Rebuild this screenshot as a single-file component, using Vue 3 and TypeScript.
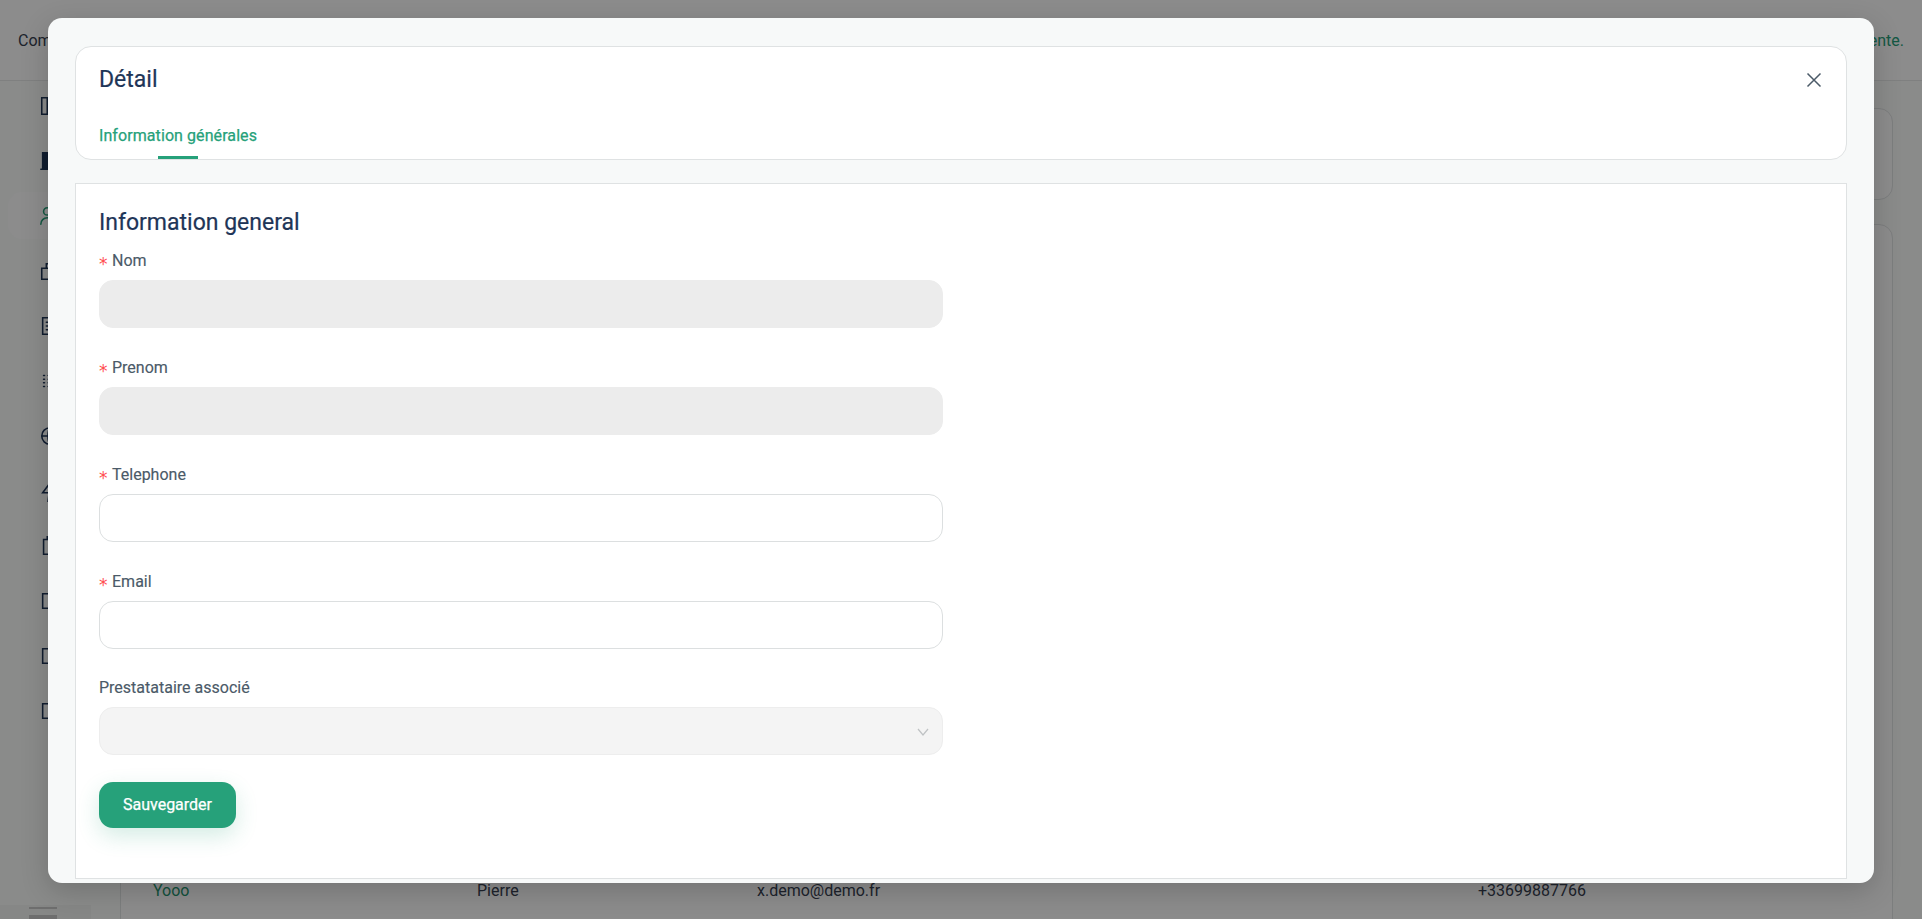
<script setup lang="ts">
interface Field {
  label: string;
  required: boolean;
  kind: 'disabled' | 'text' | 'select';
}

const fields: Field[] = [
  { label: 'Nom', required: true, kind: 'disabled' },
  { label: 'Prenom', required: true, kind: 'disabled' },
  { label: 'Telephone', required: true, kind: 'text' },
  { label: 'Email', required: true, kind: 'text' },
  { label: 'Prestatataire associé', required: false, kind: 'select' },
];

const navIcons = [
  { d: 'M3 3h18v18H3zM9 3v18M13 8h4' },
  { d: 'M4 3h17v18H4zM2 21h20', solid: true },
  { d: 'M9 11a4 4 0 1 0 0-8 4 4 0 0 0 0 8zM2 21c0-4 3-7 7-7s7 3 7 7' },
  { d: 'M3 9h18v12H3zM8 9V4h8v5' },
  { d: 'M4 3h16v18H4zM8 8h8M8 12h8M8 16h5' },
  { d: 'M5 6h1M5 10h1M5 14h1M5 18h1M10 6h1M10 10h1M10 14h1M10 18h1' },
  { d: 'M12 21a9 9 0 1 0 0-18 9 9 0 0 0 0 18zM3 12h18M12 3c3 3 3 15 0 18M12 3c-3 3-3 15 0 18' },
  { d: 'M13 2 4 14h7l-1 8 9-12h-7z' },
  { d: 'M5 5h14v16H5zM9 5V2h6v3' },
  { d: 'M4 4h16v16H4z' },
  { d: 'M4 4h16v16H4z' },
  { d: 'M4 4h16v16H4z' },
];
</script>

<template>
  <div class="page">
    <header class="topbar">
      <span class="topbar-left">Compte</span>
      <span class="topbar-right">Votre compte est en attente.</span>
    </header>
    <div class="layout">
      <aside class="sidebar">
        <div
          v-for="(icon, i) in navIcons"
          :key="i"
          class="nav-item"
          :class="{ 'nav-active': i === 2 }"
        >
          <svg
            width="22"
            height="22"
            viewBox="0 0 24 24"
            :fill="icon.solid ? 'currentColor' : 'none'"
            stroke="currentColor"
            stroke-width="1.7"
            stroke-linecap="round"
          >
            <path :d="icon.d" />
          </svg>
        </div>
        <div class="sidebar-foot">
          <span class="foot-line"></span>
          <span class="foot-line thick"></span>
        </div>
      </aside>
      <main class="main">
        <div class="card card-top"></div>
        <div class="card card-table">
          <div class="row">
            <span class="cell-name">Yooo</span>
            <span class="cell-first">Pierre</span>
            <span class="cell-mail">x.demo@demo.fr</span>
            <span class="cell-phone">+33699887766</span>
          </div>
        </div>
      </main>
    </div>

    <div class="mask">
      <div class="modal">
        <div class="modal-head">
          <div class="head-row">
            <h2 class="modal-title">Détail</h2>
            <svg class="close" width="16" height="16" viewBox="0 0 16 16" fill="none" stroke="#4b5a68" stroke-width="1.5">
              <path d="M1.5 1.5l13 13M14.5 1.5l-13 13" />
            </svg>
          </div>
          <div class="tabs">
            <span class="tab">Information générales</span>
            <span class="tab-ink"></span>
          </div>
        </div>

        <section class="panel">
          <h3 class="panel-title">Information general</h3>
          <div
            v-for="f in fields"
            :key="f.label"
            class="field"
            :class="{ 'field-select': f.kind === 'select' }"
          >
            <label class="label">
              <span v-if="f.required" class="star">*</span>{{ f.label }}
            </label>
            <div v-if="f.kind === 'select'" class="control control-select">
              <svg width="12" height="8" viewBox="0 0 12 8" fill="none" stroke="#bfc2c4" stroke-width="1.2">
                <path d="M1 1l5 6 5-6" />
              </svg>
            </div>
            <div v-else class="control" :class="`control-${f.kind}`"></div>
          </div>
          <button class="save" type="button">Sauvegarder</button>
        </section>
      </div>
    </div>
  </div>
</template>

<style>
html,
body {
  margin: 0;
  overflow: hidden;
}
</style>

<style scoped>
.page {
  position: relative;
  width: 1922px;
  height: 919px;
  overflow: hidden;
  background: #fbfdfc;
  font-family: Roboto, "Liberation Sans", sans-serif;
}
.topbar {
  display: flex;
  align-items: center;
  justify-content: space-between;
  box-sizing: border-box;
  height: 81px;
  padding: 0 18px;
  background: #fff;
  border-bottom: 1px solid #e8eaea;
  font-size: 16px;
  color: #374151;
}
.topbar-right {
  color: #26a17a;
}
.layout {
  display: flex;
  height: 838px;
}
.sidebar {
  position: relative;
  display: flex;
  flex-direction: column;
  gap: 8px;
  box-sizing: border-box;
  width: 120px;
  padding: 1px 10px 0 8px;
  color: #1e3557;
}
.nav-item {
  display: flex;
  align-items: center;
  flex: none;
  height: 47px;
  padding-left: 31px;
  border-radius: 14px;
}
.nav-active {
  color: #26a17a;
  background: #fff;
}
.sidebar-foot {
  position: absolute;
  left: 0;
  width: 91px;
  bottom: 0;
  height: 14px;
  background: #f4f6f5;
}
.foot-line {
  display: block;
  width: 28px;
  height: 2px;
  margin: 2px 0 0 29px;
  background: #c8c8c8;
}
.foot-line.thick {
  height: 4px;
  margin-top: 6px;
}
.main {
  flex: 1;
  box-sizing: border-box;
  min-width: 0;
  padding: 27px 29px 0 0;
}
.card {
  box-sizing: border-box;
  margin-bottom: 24px;
  background: #fff;
  border: 1px solid #e2e5e6;
  border-radius: 14px;
}
.card-top {
  height: 92px;
}
.card-table {
  position: relative;
  height: 720px;
}
.row {
  position: absolute;
  left: 32px;
  right: 0;
  top: 655px;
  display: grid;
  grid-template-columns: 324px 280px 721px 1fr;
  font-size: 16px;
  line-height: 22px;
  color: #374151;
}
.cell-name {
  color: #1f9470;
}
.mask {
  position: absolute;
  inset: 0;
  background: rgba(0, 0, 0, 0.45);
}
.modal {
  box-sizing: border-box;
  width: 1826px;
  height: 865px;
  margin: 18px 0 0 48px;
  padding: 28px 27px 0;
  background: #f7f9f9;
  border-radius: 14px;
  box-shadow: 0 8px 28px rgba(0, 0, 0, 0.18);
}
.modal-head {
  position: relative;
  box-sizing: border-box;
  height: 114px;
  padding: 0 23px;
  background: #fff;
  border: 1px solid #dfe2e3;
  border-radius: 16px;
}
.head-row {
  display: flex;
  align-items: center;
  justify-content: space-between;
  height: 62px;
}
.modal-title {
  margin: 2px 0 0;
  font-size: 23px;
  font-weight: 400;
  color: #1e3557;
  -webkit-text-stroke: 0.2px #1e3557;
}
.close {
  margin-top: 4px;
  margin-right: 1px;
}
.tabs {
  display: flex;
}
.tab {
  margin-top: 16px;
  font-size: 16px;
  line-height: 22px;
  font-weight: 400;
  letter-spacing: 0.08px;
  color: #26a17a;
  -webkit-text-stroke: 0.25px #26a17a;
}
.tab-ink {
  position: absolute;
  left: 82px;
  bottom: 0;
  width: 40px;
  height: 3px;
  background: #26a17a;
}
.panel {
  box-sizing: border-box;
  height: 696px;
  margin-top: 23px;
  padding: 24px 23px 0;
  background: #fff;
  border: 1px solid #dfe2e3;
}
.panel-title {
  margin: 0 0 10px;
  font-size: 23px;
  line-height: 30px;
  font-weight: 400;
  color: #1e3557;
  -webkit-text-stroke: 0.2px #1e3557;
}
.field {
  width: 844px;
  margin-bottom: 27px;
}
.field-select {
  margin-top: -1px;
}
.label {
  display: flex;
  align-items: center;
  height: 24px;
  margin-bottom: 8px;
  font-size: 16px;
  color: #4b5a68;
  -webkit-text-stroke: 0.15px #4b5a68;
}
.star {
  flex: none;
  width: 13px;
  height: 16px;
  font-family: "DejaVu Sans", sans-serif;
  font-size: 17px;
  line-height: 24px;
  color: #ff4d4f;
  -webkit-text-stroke: 0;
}
.control {
  box-sizing: border-box;
  height: 48px;
  background: #fff;
  border: 1px solid #dcdfe0;
  border-radius: 14px;
}
.control-disabled {
  background: #ececec;
  border-color: #ececec;
}
.control-select {
  display: flex;
  align-items: center;
  justify-content: flex-end;
  padding-right: 13px;
  background: #f4f4f4;
  border-color: #ededed;
}
.control-select svg {
  margin-top: 2px;
}
.save {
  display: block;
  width: 137px;
  height: 46px;
  padding-bottom: 2px;
  background: #26a17a;
  border: none;
  border-radius: 14px;
  color: #fff;
  font-family: inherit;
  font-size: 16px;
  font-weight: 400;
  -webkit-text-stroke: 0.25px #fff;
  box-shadow: 0 8px 22px rgba(38, 161, 122, 0.2);
}
</style>
